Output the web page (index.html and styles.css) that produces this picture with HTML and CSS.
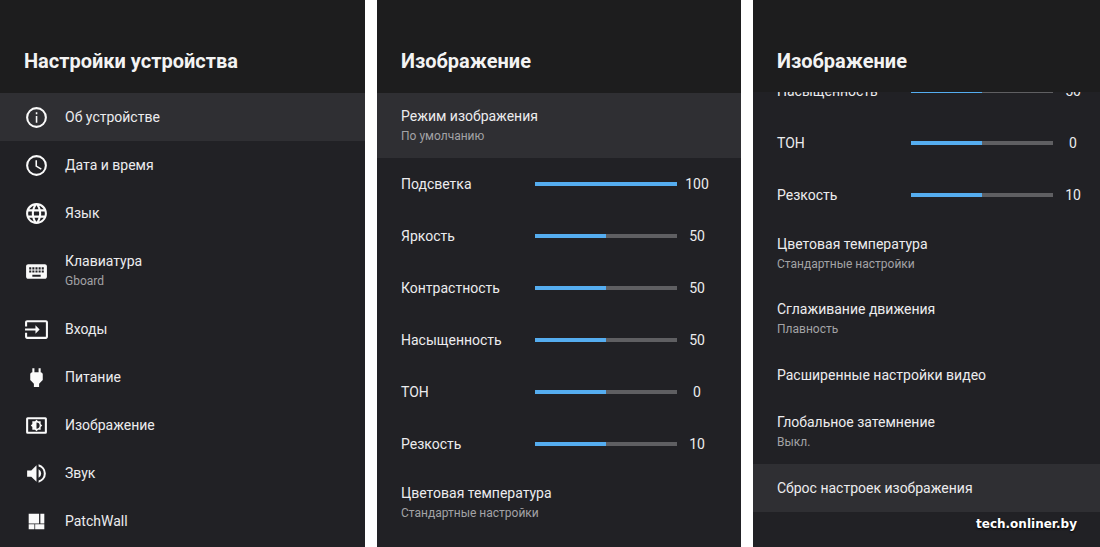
FILE: index.html
```html
<!DOCTYPE html>
<html lang="ru">
<head>
<meta charset="utf-8">
<meta name="viewport" content="width=device-width, initial-scale=1">
<title>Настройки устройства</title>
<link rel="stylesheet" href="styles.css">
</head>
<body>
<main class="screens">
  <section class="panel">
    <h1 class="panel-title">Настройки устройства</h1>
    <nav class="list">
      <button class="row nav-row selected" type="button">
        <svg class="icon" viewBox="0 0 24 24"><path d="M11.300 7h1.500v1.800h-1.500zm0 3.500h1.500V17h-1.500zM12 2a10 10 0 1 0 0 20 10 10 0 0 0 0-20zm0 18a8 8 0 1 1 0-16 8 8 0 0 1 0 16z"/></svg>
        <span class="text">Об устройстве</span>
      </button>
      <button class="row nav-row" type="button">
        <svg class="icon" viewBox="0 0 24 24"><path d="M12 2a10 10 0 1 0 0 20 10 10 0 0 0 0-20zm0 18a8 8 0 1 1 0-16 8 8 0 0 1 0 16zM12.500 7H11v6l5.250 3.150.75-1.230-4.500-2.670z"/></svg>
        <span class="text">Дата и время</span>
      </button>
      <button class="row nav-row" type="button">
        <svg class="icon" viewBox="0 0 24 24"><path d="M11.990 2C6.470 2 2 6.480 2 12s4.470 10 9.990 10C17.520 22 22 17.520 22 12S17.520 2 11.990 2zm6.930 6h-2.950c-.32-1.250-.78-2.450-1.380-3.560 1.840.63 3.370 1.910 4.330 3.560zM12 4.040c.83 1.200 1.480 2.530 1.910 3.960h-3.820c.43-1.430 1.080-2.760 1.910-3.960zM4.260 14C4.100 13.360 4 12.690 4 12s.1-1.360.26-2h3.380c-.08.66-.14 1.320-.14 2s.06 1.340.14 2H4.260zm.82 2h2.950c.32 1.250.78 2.450 1.380 3.560-1.840-.63-3.370-1.900-4.330-3.560zm2.950-8H5.080c.96-1.660 2.490-2.930 4.330-3.560C8.810 5.550 8.350 6.750 8.030 8zM12 19.960c-.83-1.200-1.480-2.530-1.910-3.960h3.820c-.43 1.430-1.080 2.760-1.910 3.960zM14.340 14H9.660c-.09-.66-.16-1.320-.16-2s.07-1.350.16-2h4.680c.09.65.16 1.320.16 2s-.07 1.340-.16 2zm.25 5.560c.6-1.110 1.060-2.310 1.380-3.560h2.950c-.96 1.650-2.490 2.930-4.330 3.560zM16.360 14c.08-.66.14-1.320.14-2s-.06-1.340-.14-2h3.380c.16.64.26 1.310.26 2s-.1 1.360-.26 2h-3.380z"/></svg>
        <span class="text">Язык</span>
      </button>
      <button class="row nav-row two-line" type="button">
        <svg class="icon" viewBox="0 0 24 24"><path d="M20 5H4c-1.100 0-2 .9-2 2v10c0 1.100.9 2 2 2h16c1.100 0 2-.9 2-2V7c0-1.100-.9-2-2-2zm-9 3h2v2h-2zm0 3h2v2h-2zM8 8h2v2H8zm0 3h2v2H8zm-1 2H5v-2h2zm0-3H5V8h2zm9 7H8v-2h8zm0-4h-2v-2h2zm0-3h-2V8h2zm3 3h-2v-2h2zm0-3h-2V8h2z"/></svg>
        <span class="text">Клавиатура<small class="sub">Gboard</small></span>
      </button>
      <button class="row nav-row" type="button">
        <svg class="icon" viewBox="0 0 24 24"><path d="M21 3H3c-1.100 0-2 .9-2 2v4h2V5h18v14H3v-4H1v4c0 1.100.9 2 2 2h18c1.100 0 2-.9 2-2V5c0-1.100-.9-2-2-2zM11 16l4-4-4-4v3H1v2h10z"/></svg>
        <span class="text">Входы</span>
      </button>
      <button class="row nav-row" type="button">
        <svg class="icon" viewBox="0 0 24 24"><path d="M16.010 7L16 3h-2v4h-4V3H8v4h-.01C7 6.990 6 7.990 6 8.990v5.490L9.500 18v3h5v-3l3.500-3.510v-5.500c0-1-1-2-1.990-1.990z"/></svg>
        <span class="text">Питание</span>
      </button>
      <button class="row nav-row" type="button">
        <svg class="icon" viewBox="0 0 24 24"><path d="M20.500 4h-17A1.500 1.500 0 0 0 2 5.500v13A1.500 1.500 0 0 0 3.500 20h17a1.500 1.500 0 0 0 1.500-1.500v-13A1.500 1.500 0 0 0 20.500 4zM20 18H4V6h16zM8 16h2.500l1.500 1.500 1.500-1.500H16v-2.500l1.500-1.500-1.500-1.500V8h-2.500L12 6.500 10.500 8H8v2.500L6.500 12 8 13.500zm4-7a3 3 0 0 1 0 6z"/></svg>
        <span class="text">Изображение</span>
      </button>
      <button class="row nav-row" type="button">
        <svg class="icon" viewBox="0 0 24 24"><path d="M3 9v6h4l5 5V4L7 9zm13.500 3A4.500 4.500 0 0 0 14 7.970v8.050A4.470 4.470 0 0 0 16.500 12zM14 3.230v2.060a7 7 0 0 1 0 13.420v2.060a9 9 0 0 0 0-17.540z"/></svg>
        <span class="text">Звук</span>
      </button>
      <button class="row nav-row" type="button">
        <svg class="icon" viewBox="0 0 24 24"><path d="M4.500 4.500h10v9.500h-10zM15.700 4.500h3.800v9.500h-3.800zM4.500 14.700h5.500v4.800H4.500zM10.700 14.700h8.800v4.800h-8.800z"/></svg>
        <span class="text">PatchWall</span>
      </button>
    </nav>
  </section>

  <section class="panel">
    <h2 class="panel-title">Изображение</h2>
    <div class="list">
      <button class="row two-line selected" type="button"><span class="text">Режим изображения<small class="sub">По умолчанию</small></span></button>
      <div class="row slider-row"><label for="backlight">Подсветка</label><input class="slider" id="backlight" type="range" min="0" max="100" value="100" style="--fill:100%"><output for="backlight">100</output></div>
      <div class="row slider-row"><label for="brightness">Яркость</label><input class="slider" id="brightness" type="range" min="0" max="100" value="50" style="--fill:50%"><output for="brightness">50</output></div>
      <div class="row slider-row"><label for="contrast">Контрастность</label><input class="slider" id="contrast" type="range" min="0" max="100" value="50" style="--fill:50%"><output for="contrast">50</output></div>
      <div class="row slider-row"><label for="saturation">Насыщенность</label><input class="slider" id="saturation" type="range" min="0" max="100" value="50" style="--fill:50%"><output for="saturation">50</output></div>
      <div class="row slider-row"><label for="tone">ТОН</label><input class="slider" id="tone" type="range" min="-50" max="50" value="0" style="--fill:50%"><output for="tone">0</output></div>
      <div class="row slider-row"><label for="sharpness">Резкость</label><input class="slider" id="sharpness" type="range" min="0" max="20" value="10" style="--fill:50%"><output for="sharpness">10</output></div>
      <button class="row two-line" type="button"><span class="text">Цветовая температура<small class="sub">Стандартные настройки</small></span></button>
    </div>
  </section>

  <section class="panel scrolled">
    <h2 class="panel-title">Изображение</h2>
    <div class="list">
      <div class="row slider-row"><label for="saturation-2">Насыщенность</label><input class="slider" id="saturation-2" type="range" min="0" max="100" value="50" style="--fill:50%"><output for="saturation-2">50</output></div>
      <div class="row slider-row"><label for="tone-2">ТОН</label><input class="slider" id="tone-2" type="range" min="-50" max="50" value="0" style="--fill:50%"><output for="tone-2">0</output></div>
      <div class="row slider-row"><label for="sharpness-2">Резкость</label><input class="slider" id="sharpness-2" type="range" min="0" max="20" value="10" style="--fill:50%"><output for="sharpness-2">10</output></div>
      <button class="row two-line" type="button"><span class="text">Цветовая температура<small class="sub">Стандартные настройки</small></span></button>
      <button class="row two-line" type="button"><span class="text">Сглаживание движения<small class="sub">Плавность</small></span></button>
      <button class="row" type="button"><span class="text">Расширенные настройки видео</span></button>
      <button class="row two-line" type="button"><span class="text">Глобальное затемнение<small class="sub">Выкл.</small></span></button>
      <button class="row selected" type="button"><span class="text">Сброс настроек изображения</span></button>
    </div>
    <span class="watermark">tech.onliner.by</span>
  </section>
</main>
</body>
</html>
```
FILE: styles.css
```css
* {
  box-sizing: border-box;
}

body {
  margin: 0;
  background: #fff;
  color: #ececee;
  font-family: Roboto, sans-serif;
  font-size: 14px;
  line-height: 20px;
}

.screens {
  display: grid;
  grid-template-columns: 365fr 364fr 347fr;
  gap: 12px;
  height: 100vh;
}

.panel {
  position: relative;
  display: flex;
  flex-direction: column;
  min-width: 0;
  overflow: hidden;
  background: #212125;
}

.panel-title {
  flex: none;
  margin: 0;
  padding: 49px 24px 20px;
  background: #1d1d1e;
  color: #f3f3f3;
  font-size: 20px;
  font-weight: 700;
  line-height: 24px;
}

.list {
  display: flex;
  flex: 1;
  flex-direction: column;
  min-height: 0;
  overflow: hidden;
}

.row {
  display: flex;
  flex: none;
  align-items: center;
  min-height: 48px;
  padding: 0 24px;
  border: 0;
  background: none;
  color: inherit;
  font: inherit;
  text-align: left;
}

.two-line {
  min-height: 65px;
}

.selected {
  background: #2f2f33;
}

.nav-row {
  gap: 16px;
}

.nav-row.two-line {
  min-height: 68px;
}

.icon {
  flex: none;
  width: 25px;
  height: 25px;
  fill: #fafafa;
  fill-rule: evenodd;
}

.sub {
  display: block;
  color: #a3a3a6;
  font-size: 12px;
}

.slider-row {
  display: grid;
  grid-template-columns: 134px minmax(0, 142px) 40px;
  min-height: 52px;
  padding-right: 0;
}

/* The scrolled list starts partway through its first row. */
.scrolled .panel-title {
  padding-bottom: 19px;
}

.scrolled .row:first-child {
  margin-top: -27px;
}

.slider {
  width: 100%;
  height: 4px;
  margin: 0;
  appearance: none;
  background: linear-gradient(to right, #55adf0 var(--fill), #5f5f62 var(--fill));
}

.slider::-webkit-slider-thumb {
  width: 0;
  height: 0;
  appearance: none;
}

output {
  text-align: center;
}

.watermark {
  position: absolute;
  right: 23px;
  bottom: 13px;
  color: #fff;
  font-family: "DejaVu Sans", sans-serif;
  font-size: 12px;
  font-weight: 700;
  line-height: 20px;
  text-shadow: 0 1px 2px #000;
}
```
